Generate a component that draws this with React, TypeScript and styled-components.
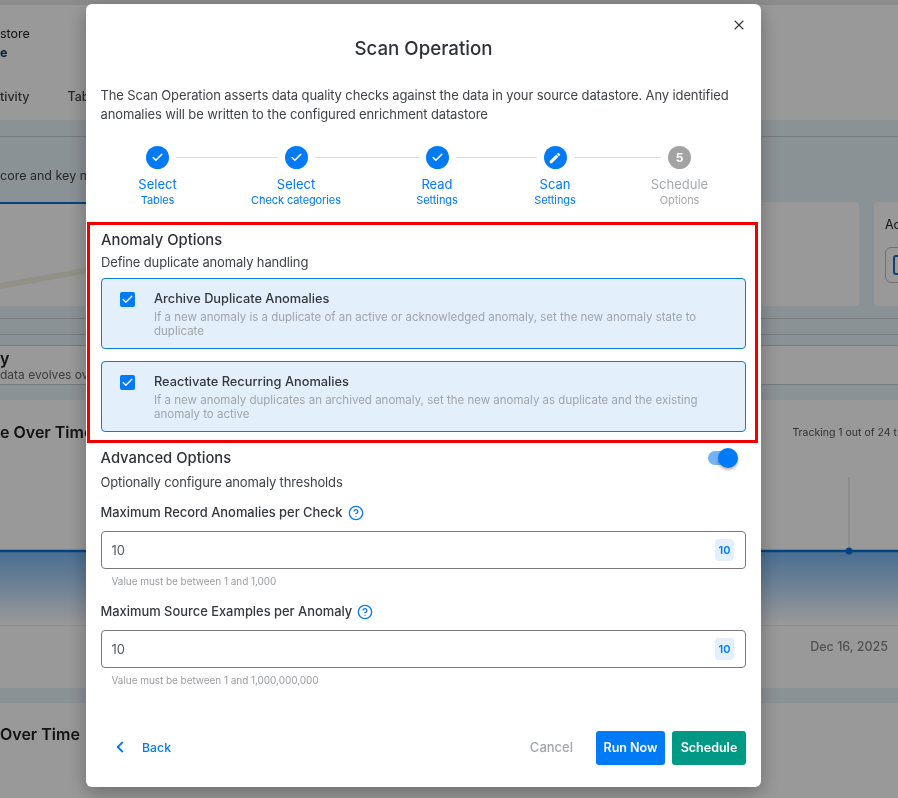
import React from "react";
import styled, { createGlobalStyle } from "styled-components";
import { Check, X, ChevronLeft, CircleHelp } from "lucide-react";

const Global = createGlobalStyle`
  html, body { margin: 0; padding: 0; background: #fff; }
  * { box-sizing: border-box; }
`;

const PageBack = styled.div`
  width: 898px;
  height: 798px;
  overflow: hidden;
  display: flex;
  flex-direction: column;
  background: #fff;
  color: #222;
  font-family: Inter, sans-serif;
  filter: blur(0.7px);
`;
const TopBar = styled.div`
  height: 120px;
  flex: none;
  display: flex;
  flex-direction: column;
  border-top: 5px solid #e8e8e8;
  font-size: 12.5px;
`;
const StoreName = styled.div`
  margin-top: 20px;
  line-height: 17px;
`;
const StoreKind = styled.div`
  line-height: 22px;
  font-weight: 700;
  color: #0d3b66;
`;
const BackTabs = styled.div`
  margin-top: 25px;
  display: flex;
  gap: 38px;
  font-size: 12.5px;
  font-weight: 500;
  color: #444;
`;
const BlueZone = styled.div`
  height: 226px;
  flex: none;
  background: #e8f3f9;
  display: flex;
  flex-direction: column;
`;
const ZoneHead = styled.div`
  height: 17px;
  flex: none;
  border-bottom: 1px solid #c9d0d4;
`;
const ZoneCaption = styled.div`
  height: 65px;
  flex: none;
  padding-top: 31px;
  font-size: 12.5px;
  color: #444;
  white-space: nowrap;
`;
const BackCards = styled.div`
  height: 104px;
  flex: none;
  display: flex;
  gap: 15px;
`;
const BackCard = styled.div`
  flex: 1;
  background: #fff;
  border-radius: 0 4px 4px 0;
  overflow: hidden;
`;
const TabUnderline = styled.div`
  width: 100px;
  height: 2px;
  background: #0a6fd6;
`;
const BackSideCard = styled.div`
  width: 24px;
  flex: none;
  background: #fff;
  border-radius: 4px 0 0 4px;
  padding: 15px 11px;
  font-size: 12.5px;
  white-space: nowrap;
`;
const BackOutline = styled.div`
  margin-top: 15px;
  height: 36px;
  width: 60px;
  border: 1px solid #bbb;
  border-radius: 6px;
  padding: 7px 7px;
`;
const BackGlyph = styled.div`
  width: 14px;
  height: 20px;
  border: 2px solid #0a6fd6;
  border-radius: 3px;
`;
const ZoneLines = styled.div`
  height: 28px;
  flex: none;
  margin-top: 12px;
  border-top: 1px solid #c9d0d4;
  border-bottom: 1px solid #c9d0d4;
`;
const ZoneMidLine = styled.div`
  height: 16px;
  border-bottom: 1px solid #c9d0d4;
`;
const ZoneNote = styled.div`
  height: 39px;
  flex: none;
  background: #fff;
  border-bottom: 1px solid #c9d0d4;
`;
const NoteHead = styled.div`
  font-size: 16px;
  line-height: 18px;
  font-weight: 600;
  margin-top: 3px;
`;
const NoteSub = styled.div`
  font-size: 12px;
  line-height: 16px;
  color: #666;
`;
const ZoneGap = styled.div<{ $h: number }>`
  height: ${(p) => p.$h}px;
  flex: none;
  background: #e8f3f9;
`;
const ChartCard = styled.div`
  height: 288px;
  flex: none;
  display: flex;
  flex-direction: column;
`;
const ChartHead = styled.div`
  flex: none;
  height: 64px;
  display: flex;
  justify-content: space-between;
  align-items: center;
`;
const ChartTitle = styled.div`
  font-size: 16px;
  font-weight: 600;
  white-space: nowrap;
`;
const Tracking = styled.div`
  font-size: 10.5px;
  color: #555;
  white-space: nowrap;
  margin-right: 1px;
`;
const ChartSvg = styled.svg`
  display: block;
  flex: none;
`;
const DateRow = styled.div`
  flex: 1;
  display: flex;
  justify-content: flex-end;
  padding: 13px 10px 0 0;
  border-top: 1px solid #eee;
  font-size: 12.5px;
  font-weight: 500;
  color: #888;
`;
const SecondTitle = styled.div`
  flex: 1;
  font-size: 16px;
  font-weight: 600;
  padding-top: 21px;
`;

const Backdrop = styled.div`
  position: fixed;
  inset: 0;
  background: rgba(0, 0, 0, 0.4);
`;
const Modal = styled.div`
  margin: 4px 0 0 86px;
  width: 675px;
  height: 783px;
  background: #fff;
  border-radius: 6px;
  box-shadow: 0 6px 20px rgba(0, 0, 0, 0.3);
  display: flex;
  flex-direction: column;
  font-family: Inter, "Noto Sans", sans-serif;
  color: #2f3338;
  position: relative;
`;
const CloseBtn = styled.button`
  position: absolute;
  top: 13px;
  right: 14px;
  border: 0;
  background: none;
  padding: 0;
  display: flex;
  color: #333;
`;
const Title = styled.h2`
  margin: 33px 0 0;
  font-size: 18.7px;
  line-height: 24px;
  font-weight: 500;
  text-align: center;
`;
const Intro = styled.p`
  margin: 25px 15px 0 14.5px;
  font-size: 13px;
  line-height: 19px;
  letter-spacing: -0.12px;
  color: #3f4347;
`;
const Stepper = styled.div`
  margin: 22px 15px 0;
  display: grid;
  grid-template-columns: 113px 164px 118px 118px 131px;
`;
const Step = styled.div`
  display: flex;
  flex-direction: column;
  align-items: center;
`;
const StepHead = styled.div`
  width: 100%;
  display: flex;
  align-items: center;
  gap: 7px;
`;
const Connector = styled.span<{ $hidden?: boolean }>`
  flex: 1;
  height: 1px;
  background: ${(p) => (p.$hidden ? "transparent" : "#d9dcdf")};
`;
const StepDot = styled.span<{ $done: boolean }>`
  width: 23px;
  height: 23px;
  flex: none;
  border-radius: 50%;
  display: flex;
  align-items: center;
  justify-content: center;
  background: ${(p) => (p.$done ? "#007bf5" : "#a3a3a3")};
  color: #fff;
  font-size: 12px;
  font-weight: 700;
`;
const StepMain = styled.div<{ $done: boolean }>`
  margin-top: 7px;
  font-size: 13px;
  line-height: 17px;
  color: ${(p) => (p.$done ? "#007bf5" : "#a8abae")};
`;
const StepSub = styled.div<{ $done: boolean }>`
  font-size: 11px;
  line-height: 15px;
  letter-spacing: -0.1px;
  color: ${(p) => (p.$done ? "#007bf5" : "#a8abae")};
`;
const RedBox = styled.section`
  margin: 14px 0 0 1px;
  width: 671px;
  height: 221px;
  border: 3px solid #f00000;
  padding: 4px 11px 0 11px;
`;
const SectionTitle = styled.h3`
  margin: 0;
  font-size: 14.8px;
  line-height: 22px;
  font-weight: 500;
  color: #2f3338;
`;
const SectionSub = styled.p`
  margin: 1px 0 0;
  font-size: 13px;
  line-height: 20px;
  letter-spacing: -0.15px;
  color: #3f4347;
`;
const OptionList = styled.div`
  margin-top: 6px;
  display: flex;
  flex-direction: column;
  gap: 12px;
  width: 645px;
`;
const OptionCard = styled.div`
  height: 71px;
  border: 1px solid #0a7ae8;
  border-radius: 4px;
  background: #e3effb;
  display: flex;
  gap: 19px;
  padding: 12.5px 18px;
`;
const CheckMark = styled.span`
  width: 15px;
  height: 15px;
  flex: none;
  border-radius: 2px;
  background: #007bf5;
  color: #fff;
  display: flex;
  align-items: center;
  justify-content: center;
`;
const OptionBody = styled.div`
  display: flex;
  flex-direction: column;
`;
const OptionTitle = styled.div`
  font-size: 12.8px;
  line-height: 14px;
  font-weight: 500;
  color: #33383d;
`;
const OptionDesc = styled.div`
  margin-top: 4px;
  font-size: 11.5px;
  line-height: 14px;
  color: #a0a5ab;
`;
const AdvancedBlock = styled.div`
  margin: 4px 15px 0 14.5px;
  display: flex;
  flex-direction: column;
`;
const AdvancedHead = styled.div`
  display: flex;
  justify-content: space-between;
  align-items: center;
  padding-right: 11px;
  margin-bottom: 2px;
`;
const FieldList = styled.div`
  margin-top: 11px;
  display: flex;
  flex-direction: column;
  gap: 14px;
`;
const Field = styled.div`
  display: flex;
  flex-direction: column;
`;
const ToggleTrack = styled.span`
  position: relative;
  width: 27px;
  height: 14px;
  border-radius: 7px;
  background: #74b3f5;
`;
const ToggleThumb = styled.span`
  position: absolute;
  top: -3px;
  right: -3px;
  width: 20px;
  height: 20px;
  border-radius: 50%;
  background: #007bf5;
  box-shadow: 0 2px 3px rgba(0, 0, 0, 0.3);
`;
const FieldLabel = styled.label`
  display: flex;
  align-items: center;
  gap: 5px;
  font-size: 12.9px;
  line-height: 20px;
  font-weight: 500;
  color: #33383d;
`;
const HelpIcon = styled.span`
  display: flex;
  color: #0a7ae8;
`;
const InputBox = styled.div`
  margin-top: 8px;
  height: 38px;
  border: 1px solid #77797c;
  border-radius: 4px;
  display: flex;
  align-items: center;
  justify-content: space-between;
  padding: 0 11px 0 10px;
  font-size: 13px;
  color: #55595d;
`;
const Badge = styled.span`
  width: 19px;
  height: 22px;
  border-radius: 4px;
  background: #e3effb;
  color: #007bf5;
  font-size: 11px;
  font-weight: 600;
  display: flex;
  align-items: center;
  justify-content: center;
`;
const Helper = styled.div`
  margin: 5px 0 0 11px;
  font-size: 10px;
  line-height: 14px;
  letter-spacing: -0.05px;
  color: #9a9da0;
`;
const Footer = styled.div`
  margin: auto 15px 22px 15px;
  display: flex;
  align-items: center;
  gap: 7px;
`;
const BackLink = styled.button`
  margin-right: auto;
  padding: 0 0 2px 10px;
  border: 0;
  background: none;
  display: flex;
  align-items: center;
  gap: 13px;
  font: 500 12.3px Inter, sans-serif;
  color: #007bf5;
`;
const CancelBtn = styled.button`
  margin-right: 16px;
  padding: 0 0 2px;
  border: 0;
  background: none;
  font: 500 13px Inter, sans-serif;
  color: #a3a6a9;
`;
const SolidBtn = styled.button<{ $bg: string; $w: number }>`
  width: ${(p) => p.$w}px;
  height: 34px;
  padding: 0 0 2px;
  border: 0;
  border-radius: 3px;
  background: ${(p) => p.$bg};
  color: #fff;
  font: 600 12.5px Inter, sans-serif;
`;

const steps = [
  { main: "Select", sub: "Tables", state: "done" },
  { main: "Select", sub: "Check categories", state: "done" },
  { main: "Read", sub: "Settings", state: "done" },
  { main: "Scan", sub: "Settings", state: "edit" },
  { main: "Schedule", sub: "Options", state: "todo" },
];

const options = [
  {
    title: "Archive Duplicate Anomalies",
    desc: "If a new anomaly is a duplicate of an active or acknowledged anomaly, set the new anomaly state to duplicate",
  },
  {
    title: "Reactivate Recurring Anomalies",
    desc: "If a new anomaly duplicates an archived anomaly, set the new anomaly as duplicate and the existing anomaly to active",
  },
];

const fields = [
  { label: "Maximum Record Anomalies per Check", help: "Value must be between 1 and 1,000" },
  { label: "Maximum Source Examples per Anomaly", help: "Value must be between 1 and 1,000,000,000" },
];

const EditGlyph = () => (
  <svg width="14" height="14" viewBox="0 0 24 24" fill="currentColor">
    <path d="M3 17.25V21h3.75L17.81 9.94l-3.75-3.75L3 17.25zM20.71 7.04c.39-.39.39-1.02 0-1.41l-2.34-2.34a.9959.9959 0 0 0-1.41 0l-1.83 1.83 3.75 3.75 1.83-1.83z" />
  </svg>
);

export default function App() {
  return (
    <>
      <Global />
      <PageBack>
        <TopBar>
          <StoreName>store</StoreName>
          <StoreKind>e</StoreKind>
          <BackTabs>
            <span>tivity</span>
            <span>Tab</span>
          </BackTabs>
        </TopBar>
        <BlueZone>
          <ZoneHead />
          <ZoneCaption>core and key m</ZoneCaption>
          <BackCards>
            <BackCard>
              <TabUnderline />
              <svg width="120" height="102">
                <path d="M0 82 L90 66" stroke="#f3f2e2" strokeWidth="6" fill="none" />
              </svg>
            </BackCard>
            <BackSideCard>
              Ac
              <BackOutline>
                <BackGlyph />
              </BackOutline>
            </BackSideCard>
          </BackCards>
          <ZoneLines>
            <ZoneMidLine />
          </ZoneLines>
        </BlueZone>
        <ZoneNote>
          <NoteHead>y</NoteHead>
          <NoteSub>data evolves ov</NoteSub>
        </ZoneNote>
        <ZoneGap $h={15} />
        <ChartCard>
          <ChartHead>
            <ChartTitle>e Over Time</ChartTitle>
            <Tracking>Tracking 1 out of 24 t</Tracking>
          </ChartHead>
          <ChartSvg width="898" height="161" viewBox="0 0 898 161">
            <defs>
              <linearGradient id="area" x1="0" y1="0" x2="0" y2="1">
                <stop offset="0" stopColor="#0a7ae8" stopOpacity="0.55" />
                <stop offset="1" stopColor="#0a7ae8" stopOpacity="0" />
              </linearGradient>
            </defs>
            <rect x="0" y="87" width="898" height="74" fill="url(#area)" />
            <line x1="849" y1="13" x2="849" y2="87" stroke="#d6d6d6" />
            <line x1="0" y1="87" x2="898" y2="87" stroke="#0a6fd6" strokeWidth="2.5" />
            <circle cx="849" cy="87" r="3.5" fill="#0a6fd6" />
          </ChartSvg>
          <DateRow>Dec 16, 2025</DateRow>
        </ChartCard>
        <ZoneGap $h={15} />
        <SecondTitle>Over Time</SecondTitle>
      </PageBack>
      <Backdrop>
        <Modal>
          <CloseBtn>
            <X size={16} strokeWidth={1.6} />
          </CloseBtn>
          <Title>Scan Operation</Title>
          <Intro>
            The Scan Operation asserts data quality checks against the data in your source datastore. Any identified
            anomalies will be written to the configured enrichment datastore
          </Intro>
          <Stepper>
            {steps.map((s, i) => (
              <Step key={i}>
                <StepHead>
                  <Connector $hidden={i === 0} />
                  <StepDot $done={s.state !== "todo"}>
                    {s.state === "done" && <Check size={13} strokeWidth={3} />}
                    {s.state === "edit" && <EditGlyph />}
                    {s.state === "todo" && "5"}
                  </StepDot>
                  <Connector $hidden={i === steps.length - 1} />
                </StepHead>
                <StepMain $done={s.state !== "todo"}>{s.main}</StepMain>
                <StepSub $done={s.state !== "todo"}>{s.sub}</StepSub>
              </Step>
            ))}
          </Stepper>
          <RedBox>
            <SectionTitle>Anomaly Options</SectionTitle>
            <SectionSub>Define duplicate anomaly handling</SectionSub>
            <OptionList>
              {options.map((o) => (
                <OptionCard key={o.title}>
                  <CheckMark>
                    <Check size={13} strokeWidth={2.5} />
                  </CheckMark>
                  <OptionBody>
                    <OptionTitle>{o.title}</OptionTitle>
                    <OptionDesc>{o.desc}</OptionDesc>
                  </OptionBody>
                </OptionCard>
              ))}
            </OptionList>
          </RedBox>
          <AdvancedBlock>
            <AdvancedHead>
              <SectionTitle>Advanced Options</SectionTitle>
              <ToggleTrack>
                <ToggleThumb />
              </ToggleTrack>
            </AdvancedHead>
            <SectionSub>Optionally configure anomaly thresholds</SectionSub>
            <FieldList>
              {fields.map((f) => (
                <Field key={f.label}>
                  <FieldLabel>
                    {f.label}
                    <HelpIcon>
                      <CircleHelp size={16} strokeWidth={2} />
                    </HelpIcon>
                  </FieldLabel>
                  <InputBox>
                    10
                    <Badge>10</Badge>
                  </InputBox>
                  <Helper>{f.help}</Helper>
                </Field>
              ))}
            </FieldList>
          </AdvancedBlock>
          <Footer>
            <BackLink>
              <ChevronLeft size={18} strokeWidth={2.4} />
              Back
            </BackLink>
            <CancelBtn>Cancel</CancelBtn>
            <SolidBtn $bg="#007bf5" $w={69}>Run Now</SolidBtn>
            <SolidBtn $bg="#009985" $w={74}>Schedule</SolidBtn>
          </Footer>
        </Modal>
      </Backdrop>
    </>
  );
}
